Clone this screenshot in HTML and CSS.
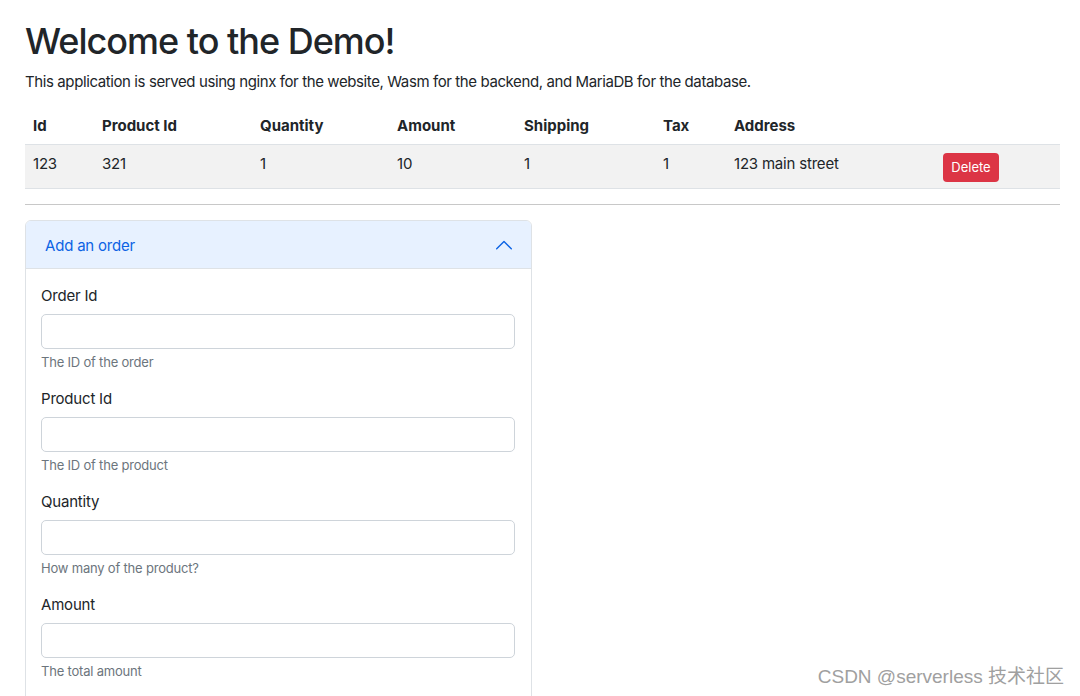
FILE: index.html
```html
<!DOCTYPE html>
<html lang="en">
<head>
<meta charset="utf-8">
<title>Demo</title>
<link rel="stylesheet" href="styles.css">
</head>
<body>
<main class="container">
  <h1 class="title">Welcome to the Demo!</h1>
  <p class="lead">This application is served using nginx for the website, Wasm for the backend, and MariaDB for the database.</p>
  <table class="orders">
    <colgroup>
      <col class="c1"><col class="c2"><col class="c3"><col class="c4"><col class="c5"><col class="c6"><col class="c7"><col class="c8">
    </colgroup>
    <thead>
      <tr><th>Id</th><th>Product Id</th><th>Quantity</th><th>Amount</th><th>Shipping</th><th>Tax</th><th>Address</th><th></th></tr>
    </thead>
    <tbody>
      <tr><td>123</td><td>321</td><td>1</td><td>10</td><td>1</td><td>1</td><td>123 main street</td><td><button class="btn-delete" type="button">Delete</button></td></tr>
    </tbody>
  </table>
  <hr class="sep">
  <section class="accordion">
    <div class="acc-header">
      <span class="acc-title">Add an order</span>
      <svg class="chev" width="16" height="16" viewBox="0 0 16 16"><path d="M0.7 11.8 L8 4.5 L15.3 11.8" fill="none" stroke="#0c63e4" stroke-width="1.4" stroke-linecap="round" stroke-linejoin="round"/></svg>
    </div>
    <div class="acc-body">
      <div class="field">
        <label class="label">Order Id</label>
        <input class="input" type="text">
        <div class="help">The ID of the order</div>
      </div>
      <div class="field">
        <label class="label">Product Id</label>
        <input class="input" type="text">
        <div class="help">The ID of the product</div>
      </div>
      <div class="field">
        <label class="label">Quantity</label>
        <input class="input" type="text">
        <div class="help">How many of the product?</div>
      </div>
      <div class="field">
        <label class="label">Amount</label>
        <input class="input" type="text">
        <div class="help">The total amount</div>
      </div>
    </div>
  </section>
</main>
<div class="watermark">CSDN @serverless 技术社区</div>
</body>
</html>
```
FILE: styles.css
```css
* { box-sizing: border-box; }
html, body { margin: 0; padding: 0; height: 100%; overflow: hidden; }
body {
  font-family: "Inter", "Liberation Sans", "Noto Sans CJK SC", sans-serif;
  color: #212529;
  background: #fff;
  font-size: 15px;
  letter-spacing: -0.2px;
}
.container {
  padding: 18px 20px 0 25px;
}
.title {
  margin: 0;
  font-size: 36px;
  line-height: 46px;
  font-weight: 500;
  letter-spacing: -1px;
}
.lead {
  margin: 7px 0 0;
  font-size: 15px;
  line-height: 22px;
  letter-spacing: -0.4px;
}
.orders {
  margin-top: 15px;
  width: 1035px;
  border-collapse: collapse;
  table-layout: fixed;
  font-size: 15px;
}
.c1 { width: 69px; } .c2 { width: 158px; } .c3 { width: 137px; } .c4 { width: 127px; }
.c5 { width: 139px; } .c6 { width: 71px; } .c7 { width: 209px; } .c8 { width: 125px; }
.orders th {
  text-align: left;
  font-weight: 700;
  letter-spacing: 0;
  padding: 0 8px;
  height: 36px;
  border-bottom: 1px solid #dee2e6;
}
.orders td {
  padding: 8px 8px 0;
  height: 44px;
  line-height: 22px;
  vertical-align: top;
  background: #f2f2f2;
  border-bottom: 1px solid #dee2e6;
}
.btn-delete {
  display: block;
  font-family: inherit;
  font-size: 13px;
  color: #fff;
  background: #dc3545;
  border: none;
  border-radius: 4px;
  width: 56px;
  height: 29px;
  padding: 0;
}
.sep {
  margin: 15px 0 0;
  width: 1035px;
  border: 0;
  border-top: 1px solid #c8c8c8;
}
.accordion {
  margin-top: 15px;
  width: 507px;
  border: 1px solid #dee2e6;
  border-radius: 6px;
  overflow: hidden;
}
.acc-header {
  height: 48px;
  background: #e7f1ff;
  border-bottom: 1px solid #dee2e6;
  display: flex;
  align-items: center;
  justify-content: space-between;
  padding: 2px 19px 0 19px;
  color: #0c63e4;
  font-size: 15px;
}
.acc-body {
  padding: 16px 15px 60px;
}
.field { margin-bottom: 17px; }
.label {
  display: block;
  line-height: 22px;
  font-size: 15px;
  margin-bottom: 7px;
}
.input {
  display: block;
  width: 474px;
  height: 35px;
  border: 1px solid #ced4da;
  border-radius: 5px;
  background: #fff;
}
.help {
  margin-top: 4px;
  font-size: 13px;
  line-height: 18px;
  color: #6c757d;
}
.watermark {
  position: absolute;
  right: 16px;
  bottom: 8px;
  font-family: "Liberation Sans", "Noto Sans CJK SC", sans-serif;
  font-size: 19px;
  letter-spacing: 0;
  color: #a0a0a0;
}
```
